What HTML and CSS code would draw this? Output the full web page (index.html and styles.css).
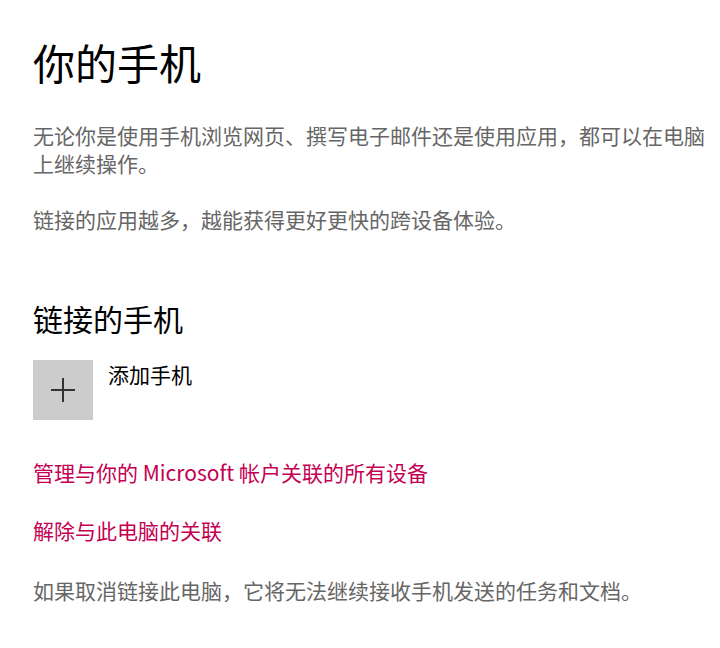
FILE: index.html
```html
<!DOCTYPE html>
<html lang="zh-CN">
<head>
    <meta charset="UTF-8">
    <meta name="viewport" content="width=device-width, initial-scale=1.0">
    <title>你的手机</title>
    <link rel="stylesheet" href="styles.css">
</head>
<body>
    <div class="page">
        <h1>你的手机</h1>

        <p class="intro">无论你是使用手机浏览网页、撰写电子邮件还是使用应用，都可以在电脑上继续操作。</p>
        <p class="intro second">链接的应用越多，越能获得更好更快的跨设备体验。</p>

        <h2>链接的手机</h2>

        <div class="add-phone">
            <div class="tile">
                <svg width="26" height="26" viewBox="0 0 26 26">
                    <path d="M13 1v24M1 13h24" stroke="#333" stroke-width="2" fill="none"/>
                </svg>
            </div>
            <span class="tile-label">添加手机</span>
        </div>

        <a class="link first" href="#">管理与你的 Microsoft 帐户关联的所有设备</a>
        <a class="link" href="#">解除与此电脑的关联</a>

        <p class="note">如果取消链接此电脑，它将无法继续接收手机发送的任务和文档。</p>
    </div>
</body>
</html>
```

FILE: styles.css
```css
* {
    margin: 0;
    padding: 0;
    box-sizing: border-box;
}

body {
    font-family: "Noto Sans CJK SC", "Noto Sans", sans-serif;
    background: #fff;
    color: #000;
}

.page {
    padding: 34px 10px 0 33px;
}

h1 {
    font-size: 42px;
    font-weight: 400;
    line-height: 56px;
}

.intro {
    margin-top: 31px;
    font-size: 21px;
    line-height: 28px;
    color: #666;
}

.intro.second {
    margin-top: 28px;
}

h2 {
    margin-top: 65px;
    font-size: 30px;
    font-weight: 400;
    line-height: 40px;
}

.add-phone {
    display: flex;
    gap: 15px;
    margin-top: 22px;
}

.tile {
    width: 60px;
    height: 60px;
    background: #ccc;
    display: flex;
    align-items: center;
    justify-content: center;
}

.tile-label {
    font-size: 21px;
    line-height: 28px;
}

.link {
    display: block;
    margin-top: 30px;
    font-size: 21px;
    line-height: 28px;
    color: #c30052;
    text-decoration: none;
}

.link.first {
    margin-top: 38px;
}

.note {
    margin-top: 32px;
    font-size: 21px;
    line-height: 28px;
    color: #666;
}
```
